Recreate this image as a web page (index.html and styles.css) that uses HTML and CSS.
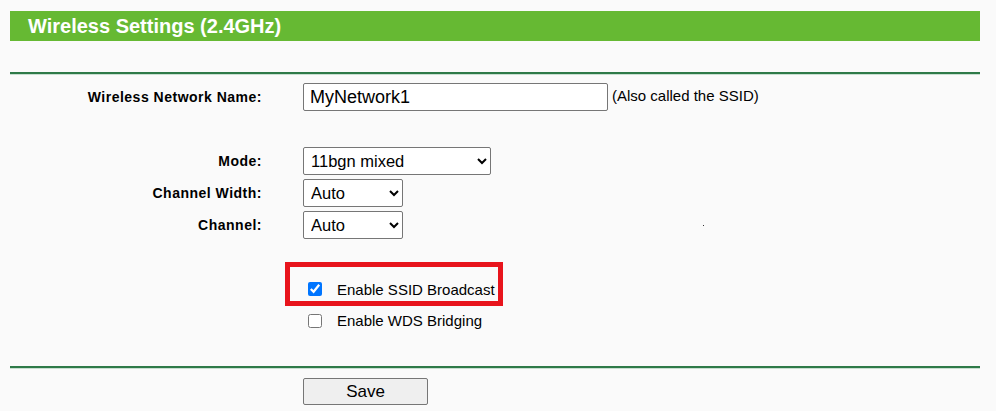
FILE: index.html
```html
<!DOCTYPE html>
<html>
<head>
<meta charset="utf-8">
<link rel="stylesheet" href="styles.css">
</head>
<body>
<div class="page">
  <div class="titlebar">Wireless Settings (2.4GHz)</div>
  <div class="rule rule-top"></div>
  <div class="row row-name">
    <label class="lbl">Wireless Network Name:</label>
    <div class="field">
      <input class="txt" type="text" value="MyNetwork1">
      <span class="hint">(Also called the SSID)</span>
    </div>
  </div>
  <div class="row row-mode">
    <label class="lbl">Mode:</label>
    <div class="field"><select class="sel sel-wide"><option>11bgn mixed</option></select></div>
  </div>
  <div class="row row-cw">
    <label class="lbl">Channel Width:</label>
    <div class="field"><select class="sel sel-narrow"><option>Auto</option></select></div>
  </div>
  <div class="row row-ch">
    <label class="lbl">Channel:</label>
    <div class="field"><select class="sel sel-narrow"><option>Auto</option></select><span class="dot"></span></div>
  </div>
  <div class="row row-ssid">
    <div class="lbl"></div>
    <div class="field">
      <div class="highlight">
        <label class="chk"><input type="checkbox" checked><span>Enable SSID Broadcast</span></label>
      </div>
    </div>
  </div>
  <div class="row row-wds">
    <div class="lbl"></div>
    <div class="field">
      <label class="chk chk-plain"><input type="checkbox"><span>Enable WDS Bridging</span></label>
    </div>
  </div>
  <div class="rule rule-bottom"></div>
  <div class="row row-save">
    <div class="lbl"></div>
    <div class="field"><button class="btn">Save</button></div>
  </div>
</div>
</body>
</html>
```
FILE: styles.css
```css
html, body {
  margin: 0;
  padding: 0;
  background: #fafafa;
  font-family: "Liberation Sans", Arial, sans-serif;
  color: #000;
  overflow: hidden;
}
.page {
  width: 970px;
  margin-left: 10px;
  padding-top: 11px;
}
.titlebar {
  height: 30px;
  background: #66b933;
  color: #fff;
  font-weight: bold;
  font-size: 20px;
  line-height: 30px;
  padding-left: 18px;
}
.rule {
  height: 2px;
  background: #2e7a48;
  border-bottom: 1px solid #c8dfd1;
}
.rule-top { margin-top: 31px; }
.row {
  display: grid;
  grid-template-columns: 252px 1fr;
  column-gap: 41px;
  align-items: center;
}
.lbl {
  text-align: right;
  font-weight: bold;
  font-size: 14px;
  letter-spacing: 0.5px;
}
.field {
  display: flex;
  align-items: center;
  position: relative;
}
.row-name { margin-top: 8px; }
.row-mode { margin-top: 36px; }
.row-cw { margin-top: 4px; }
.row-ch { margin-top: 4px; }
.row-ssid { margin-top: 23px; }
.row-wds { margin-top: 6px; }
.rule-bottom { margin-top: 37px; }
.row-save { margin-top: 9px; }

.txt {
  box-sizing: border-box;
  width: 305px;
  height: 28px;
  border: 1px solid #767676;
  border-radius: 2px;
  padding: 0 6px;
  font-family: "Liberation Sans", Arial, sans-serif;
  font-size: 18px;
  background: #fff;
  margin: 0;
}
.hint {
  font-size: 15px;
  margin-left: 4px;
  margin-top: -4px;
}
.sel {
  box-sizing: border-box;
  height: 28px;
  border: 1px solid #767676;
  border-radius: 2px;
  font-family: "Liberation Sans", Arial, sans-serif;
  font-size: 16.5px;
  background: #fff;
  padding: 0 3px;
  margin: 0;
  color: #000;
}
.sel-wide { width: 188px; }
.sel-narrow { width: 100px; }
.dot {
  position: absolute;
  left: 400px;
  top: 14px;
  width: 1px;
  height: 1px;
  background: #333;
}
.highlight {
  margin-left: -18px;
  border: 5px solid #e8141c;
  width: 218px;
  height: 44px;
  box-sizing: border-box;
  display: flex;
  align-items: center;
  padding-left: 18px;
  padding-top: 10px;
}
.chk {
  display: flex;
  align-items: center;
  font-size: 15px;
}
.chk-plain { padding-left: 5px; }
.chk input {
  margin: 0 15px 0 0;
  width: 14px;
  height: 14px;
}
.btn {
  width: 125px;
  height: 27px;
  border: 1px solid #767676;
  border-radius: 2px;
  background: #efefef;
  font-family: "Liberation Sans", Arial, sans-serif;
  font-size: 17px;
  margin: 0;
  padding: 0;
}
```
